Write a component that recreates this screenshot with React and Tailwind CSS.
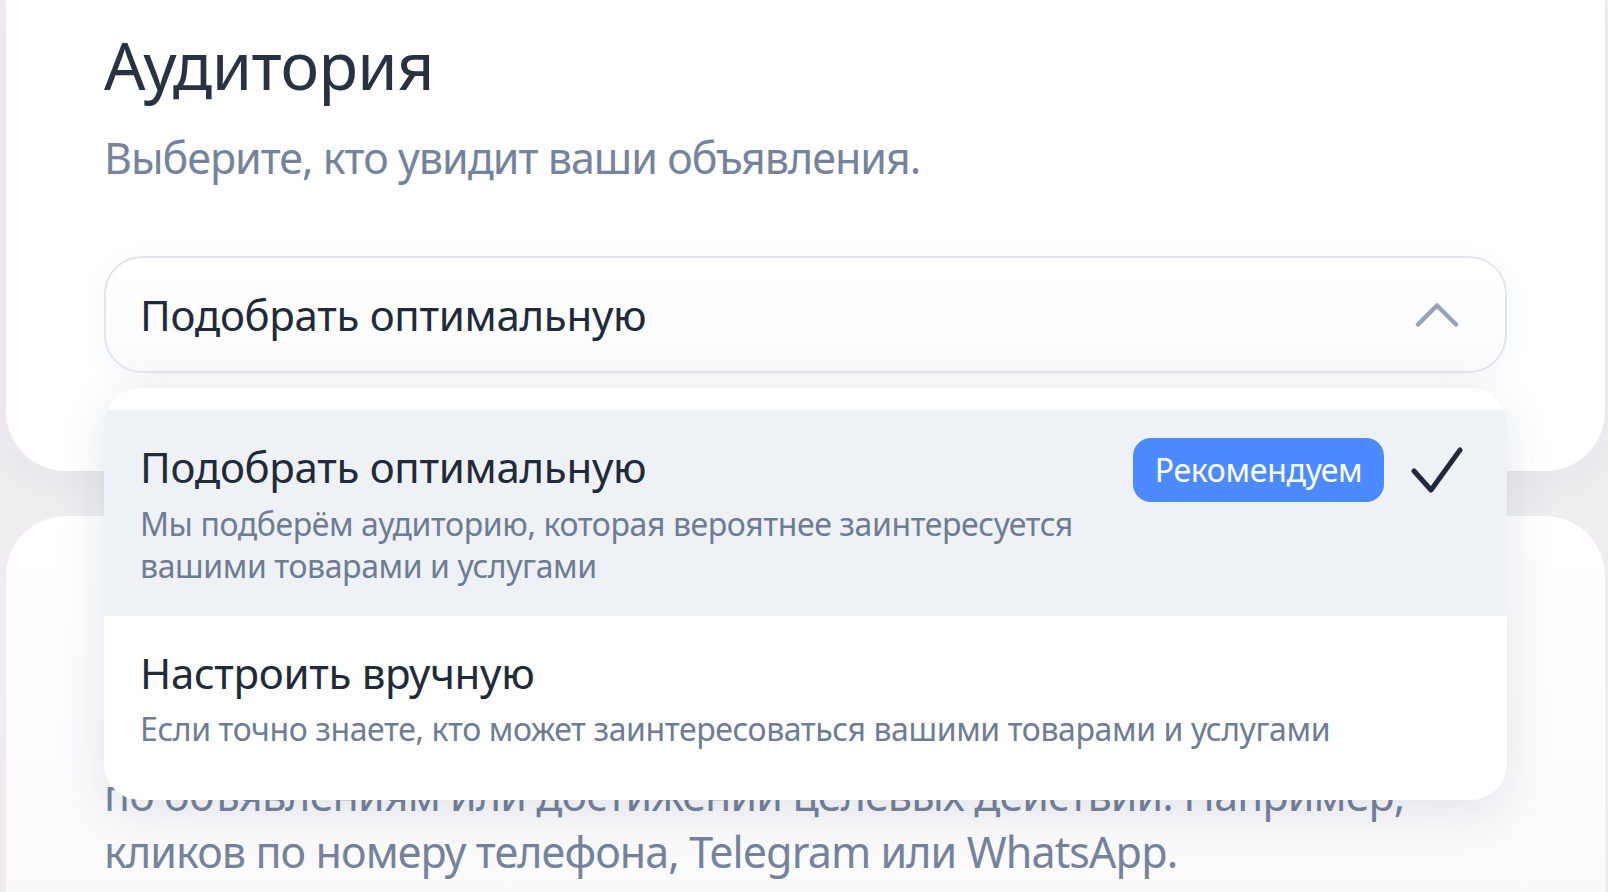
import React from "react";

function Chevron() {
  return (
    <svg width="44" height="26" viewBox="0 0 44 26" fill="none">
      <path d="M3 22.5 L22 3.5 L41 22.5" stroke="#9aa3b3" strokeWidth="4.5" strokeLinecap="round" strokeLinejoin="round" />
    </svg>
  );
}

function Check() {
  return (
    <svg width="52" height="46" viewBox="0 0 52 46" fill="none">
      <path d="M3 24 L20 43 L49 3" stroke="#222a37" strokeWidth="5" strokeLinecap="round" strokeLinejoin="round" />
    </svg>
  );
}

export default function App() {
  return (
    <div
      className="relative w-[1608px] h-[892px] overflow-hidden bg-[#efedf0] pl-[6px] pr-[3px]"
      style={{ fontFamily: '"Noto Sans", "Open Sans", sans-serif' }}
    >
      {/* top card */}
      <div className="bg-white rounded-b-[60px] pl-[98px] pr-[98px] pt-[32px] pb-[98px] shadow-[0_10px_40px_rgba(40,40,80,0.04)]">
        <h1 className="text-[65px] leading-[66px] text-[#2a3140] font-normal tracking-[-0.6px]">Аудитория</h1>
        <p className="mt-[32px] text-[43px] leading-[56px] text-[#76839a] tracking-[-1px]">
          Выберите, кто увидит ваши объявления.
        </p>
        <div className="mt-[70px] h-[117px] rounded-[38px] border-2 border-[#e2e5ec] bg-gradient-to-b from-white to-[#fafbfc] flex items-center justify-between pl-[34px] pr-[46px] shadow-[0_6px_30px_rgba(40,50,90,0.05)]">
          <span className="text-[42px] leading-[48px] text-[#222a37] tracking-[-0.3px]">Подобрать оптимальную</span>
          <Chevron />
        </div>
      </div>

      {/* second card */}
      <div className="mt-[45px] bg-white rounded-t-[60px] pl-[98px] pr-[98px] pt-[60px] h-[500px] bg-gradient-to-b from-white to-[#f9f9fb]">
        <h2 className="text-[65px] leading-[66px] text-[#2a3140] font-normal tracking-[-0.6px]">Стратегия</h2>
        <div className="mt-[10px] text-[43px] leading-[57px] text-[#76839a] tracking-[-0.9px]">
          <div>Система будет автоматически управлять ставками,</div>
          <div>чтобы получить больше конверсий — переходов</div>
          <div>по объявлениям или достижений целевых действий. Например,</div>
          <div>кликов по номеру телефона, Telegram или WhatsApp.</div>
        </div>
      </div>

      {/* dropdown */}
      <div className="absolute left-[104px] top-[388px] w-[1403px] h-[412px] bg-white rounded-[36px] overflow-hidden pt-[22px] shadow-[0_12px_50px_rgba(40,50,90,0.12)]">
        <div className="bg-[#eef1f6] pl-[36px] pr-[44px] pt-[33px] pb-[29px] flex justify-between">
          <div>
            <div className="text-[42px] leading-[48px] text-[#222a37] tracking-[-0.3px]">Подобрать оптимальную</div>
            <div className="mt-[12px] text-[32px] leading-[42px] text-[#6f7c92] tracking-[-0.4px]">
              <div>Мы подберём аудиторию, которая вероятнее заинтересуется</div>
              <div>вашими товарами и услугами</div>
            </div>
          </div>
          <div className="flex items-center gap-[27px] mt-[-5px] self-start">
            <span className="h-[64px] w-[251px] rounded-[18px] bg-[#4c8bff] text-white text-[32px] flex items-center justify-center tracking-[-0.3px]">
              Рекомендуем
            </span>
            <Check />
          </div>
        </div>
        <div className="pl-[36px] pr-[44px] pt-[33px]">
          <div className="text-[42px] leading-[48px] text-[#222a37] tracking-[-0.3px]">Настроить вручную</div>
          <div className="mt-[11px] text-[32px] leading-[42px] text-[#6f7c92] tracking-[-0.4px]">
            Если точно знаете, кто может заинтересоваться вашими товарами и услугами
          </div>
        </div>
      </div>
    </div>
  );
}
